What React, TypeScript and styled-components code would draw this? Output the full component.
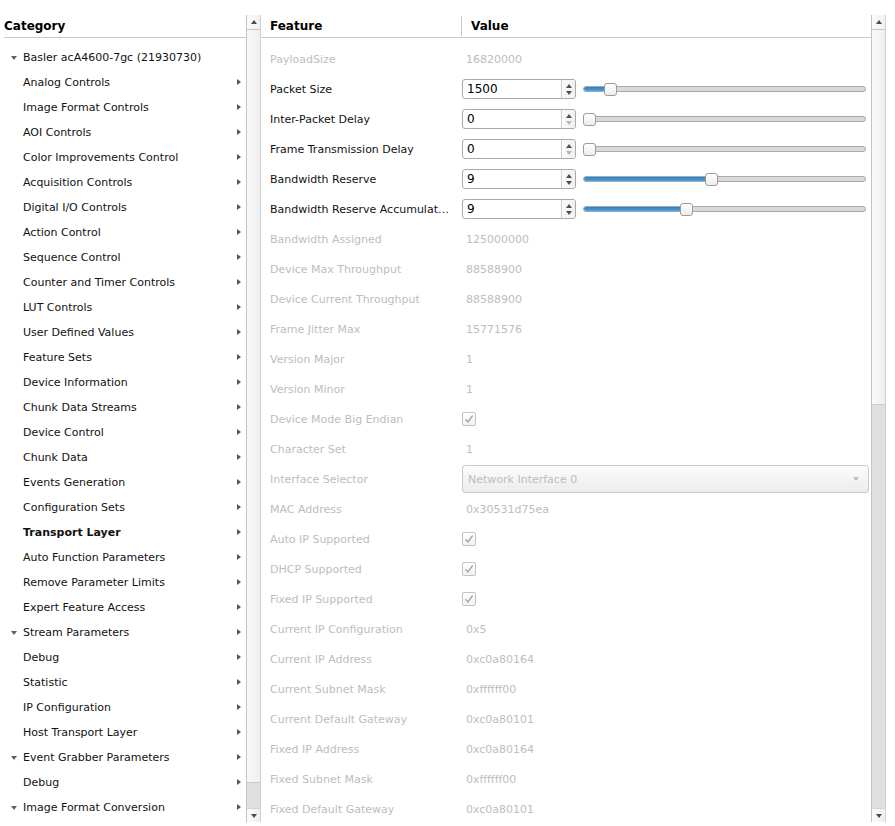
import React from 'react';
import styled, { createGlobalStyle } from 'styled-components';

const Global = createGlobalStyle`
  html, body { margin: 0; padding: 0; background: #ffffff; }
  body {
    font-family: "DejaVu Sans", Verdana, sans-serif;
    font-size: 11px;
    color: #111111;
  }
  * { box-sizing: border-box; }
`;

const Page = styled.div`
  display: flex;
  align-items: flex-start;
  padding: 15px 0 0 4px;
  width: 895px;
  height: 826px;
  overflow: hidden;
`;

const Pane = styled.div<{ $w: number }>`
  display: flex;
  width: ${(p) => p.$w}px;
  height: 807px;
  flex: none;
`;

const View = styled.div`
  flex: 1;
  display: flex;
  flex-direction: column;
  overflow: hidden;
  background: #ffffff;
`;

const Header = styled.div`
  display: flex;
  height: 23px;
  flex: none;
  border-bottom: 1px solid #c8c8c8;
`;

const HeaderCell = styled.div<{ $w?: number; $pad: number; $divider?: boolean }>`
  display: flex;
  align-items: center;
  font-weight: bold;
  font-size: 12px;
  color: #000;
  padding-left: ${(p) => p.$pad}px;
  ${(p) => (p.$w ? `width: ${p.$w}px; flex: none;` : 'flex: 1;')}
  ${(p) =>
    p.$divider
      ? `border-left: 1px solid #c8c8c8; margin: 1px 0 1px 0;`
      : ''}
`;

const Body = styled.div<{ $top: number }>`
  display: flex;
  flex-direction: column;
  padding-top: ${(p) => p.$top}px;
`;

/* ---------- tree ---------- */

const TreeRow = styled.div`
  display: flex;
  align-items: center;
  height: 25px;
  flex: none;
`;

const ExpandSlot = styled.div`
  width: 19px;
  flex: none;
  display: flex;
  justify-content: center;
  padding-left: 1px;
`;

const DownTri = styled.span`
  width: 0;
  height: 0;
  border-left: 3.5px solid transparent;
  border-right: 3.5px solid transparent;
  border-top: 4px solid #606060;
`;

const TreeText = styled.div<{ $bold?: boolean }>`
  flex: 1;
  white-space: nowrap;
  font-weight: ${(p) => (p.$bold ? 'bold' : 'normal')};
  color: #111;
`;

const SubArrow = styled.span`
  width: 0;
  height: 0;
  margin-right: 5px;
  margin-bottom: 1px;
  border-top: 3.5px solid transparent;
  border-bottom: 3.5px solid transparent;
  border-left: 4px solid #555555;
`;

/* ---------- scrollbar ---------- */

const ScrollBar = styled.div`
  width: 15px;
  flex: none;
  display: flex;
  flex-direction: column;
  border-left: 1px solid #c4c4c4;
  border-right: 1px solid #d0d0d0;
  background: linear-gradient(to right, #f9f9f9, #efefef);
`;

const ScrollBtn = styled.div<{ $bottom?: boolean; $h: number }>`
  height: ${(p) => p.$h}px;
  flex: none;
  display: flex;
  align-items: ${(p) => (p.$bottom ? 'flex-start' : 'center')};
  padding-top: ${(p) => (p.$bottom ? '5px' : '0')};
  justify-content: center;
  ${(p) => (p.$bottom ? 'border-top: 1px solid #d4d4d4;' : 'border-bottom: 1px solid #c8c8c8;')}
  background: linear-gradient(to right, #fbfbfb, #f0f0f0);
`;

const UpTri = styled.span`
  width: 0;
  height: 0;
  border-left: 3.5px solid transparent;
  border-right: 3.5px solid transparent;
  border-bottom: 4px solid #4a4a4a;
`;

const DownTriDark = styled.span`
  width: 0;
  height: 0;
  border-left: 3.5px solid transparent;
  border-right: 3.5px solid transparent;
  border-top: 4px solid #4a4a4a;
`;

const TrackSpace = styled.div`
  flex: 1;
`;

const Thumb = styled.div<{ $h: number }>`
  height: ${(p) => p.$h}px;
  flex: none;
  background: #e0e0e0;
  border-top: 1px solid #cbcbcb;
`;

/* ---------- property grid ---------- */

const PropRow = styled.div`
  display: flex;
  align-items: center;
  height: 30px;
  flex: none;
`;

const FeatureCell = styled.div<{ $disabled?: boolean }>`
  width: 201px;
  flex: none;
  padding: 0 10px 0 9px;
  white-space: nowrap;
  overflow: hidden;
  text-overflow: ellipsis;
  color: ${(p) => (p.$disabled ? '#bdbdbd' : '#111')};
`;

const ValueCell = styled.div`
  flex: 1;
  display: flex;
  align-items: center;
`;

const ValueText = styled.div`
  padding-left: 4px;
  color: #bdbdbd;
`;

const SpinBox = styled.div`
  width: 114px;
  height: 20px;
  flex: none;
  display: flex;
  border: 1px solid #a9a9a9;
  border-radius: 3px;
  background: #fff;
`;

const SpinText = styled.div`
  flex: 1;
  display: flex;
  align-items: center;
  padding-left: 4px;
  font-size: 12px;
  color: #000;
`;

const SpinButtons = styled.div`
  width: 14px;
  flex: none;
  display: flex;
  flex-direction: column;
  align-items: center;
  justify-content: center;
  gap: 3px;
  border-left: 1px solid #cfcfcf;
  background: linear-gradient(to right, #fbfbfb, #f0f0f0);
  border-radius: 0 3px 3px 0;
`;

const SpinUp = styled.span`
  width: 0;
  height: 0;
  border-left: 3.5px solid transparent;
  border-right: 3.5px solid transparent;
  border-bottom: 4px solid #505050;
`;

const SpinDown = styled.span<{ $off?: boolean }>`
  width: 0;
  height: 0;
  border-left: 3.5px solid transparent;
  border-right: 3.5px solid transparent;
  border-top: 4px solid ${(p) => (p.$off ? '#b8b8b8' : '#505050')};
`;

const Slider = styled.div`
  position: relative;
  width: 283px;
  height: 13px;
  margin-left: 7px;
  flex: none;
  display: flex;
  align-items: center;
`;

const Track = styled.div`
  width: 100%;
  height: 6px;
  border: 1px solid #a9a9a9;
  border-radius: 3px;
  background: #d9d9d9;
  overflow: hidden;
  display: flex;
`;

const Fill = styled.div`
  height: 100%;
  background: linear-gradient(to bottom, #2f7fc0, #4aa3e0);
`;

const Handle = styled.div`
  position: absolute;
  top: 0;
  width: 13px;
  height: 13px;
  border: 1px solid #9b9b9b;
  border-radius: 3px;
  background: linear-gradient(to bottom, #ffffff, #ededed);
`;

const Check = styled.div`
  width: 14px;
  height: 14px;
  flex: none;
  border: 1px solid #c3c3c3;
  border-radius: 2px;
  background: linear-gradient(to bottom, #ffffff, #f2f2f2);
  display: flex;
  align-items: center;
  justify-content: center;
`;

const Combo = styled.div`
  width: 407px;
  height: 28px;
  flex: none;
  display: flex;
  align-items: center;
  justify-content: space-between;
  padding: 0 9px 0 5px;
  border: 1px solid #cacaca;
  border-radius: 3px;
  background: linear-gradient(to bottom, #fcfcfc, #ececec);
  color: #bdbdbd;
`;

const ComboArrow = styled.span`
  width: 0;
  height: 0;
  border-left: 3.5px solid transparent;
  border-right: 3.5px solid transparent;
  border-top: 4px solid #bdbdbd;
`;

/* ---------- data ---------- */

type TreeItem = { label: string; expanded?: boolean; arrow?: boolean; bold?: boolean };

const treeItems: TreeItem[] = [
  { label: 'Basler acA4600-7gc (21930730)', expanded: true, arrow: false },
  { label: 'Analog Controls' },
  { label: 'Image Format Controls' },
  { label: 'AOI Controls' },
  { label: 'Color Improvements Control' },
  { label: 'Acquisition Controls' },
  { label: 'Digital I/O Controls' },
  { label: 'Action Control' },
  { label: 'Sequence Control' },
  { label: 'Counter and Timer Controls' },
  { label: 'LUT Controls' },
  { label: 'User Defined Values' },
  { label: 'Feature Sets' },
  { label: 'Device Information' },
  { label: 'Chunk Data Streams' },
  { label: 'Device Control' },
  { label: 'Chunk Data' },
  { label: 'Events Generation' },
  { label: 'Configuration Sets' },
  { label: 'Transport Layer', bold: true },
  { label: 'Auto Function Parameters' },
  { label: 'Remove Parameter Limits' },
  { label: 'Expert Feature Access' },
  { label: 'Stream Parameters', expanded: true },
  { label: 'Debug' },
  { label: 'Statistic' },
  { label: 'IP Configuration' },
  { label: 'Host Transport Layer' },
  { label: 'Event Grabber Parameters', expanded: true },
  { label: 'Debug' },
  { label: 'Image Format Conversion', expanded: true },
];

type Prop =
  | { kind: 'text'; label: string; value: string }
  | { kind: 'spin'; label: string; value: string; frac: number; atMin?: boolean }
  | { kind: 'check'; label: string }
  | { kind: 'combo'; label: string; value: string };

const props: Prop[] = [
  { kind: 'text', label: 'PayloadSize', value: '16820000' },
  { kind: 'spin', label: 'Packet Size', value: '1500', frac: 0.078 },
  { kind: 'spin', label: 'Inter-Packet Delay', value: '0', frac: 0, atMin: true },
  { kind: 'spin', label: 'Frame Transmission Delay', value: '0', frac: 0, atMin: true },
  { kind: 'spin', label: 'Bandwidth Reserve', value: '9', frac: 0.452 },
  { kind: 'spin', label: 'Bandwidth Reserve Accumulation', value: '9', frac: 0.361 },
  { kind: 'text', label: 'Bandwidth Assigned', value: '125000000' },
  { kind: 'text', label: 'Device Max Throughput', value: '88588900' },
  { kind: 'text', label: 'Device Current Throughput', value: '88588900' },
  { kind: 'text', label: 'Frame Jitter Max', value: '15771576' },
  { kind: 'text', label: 'Version Major', value: '1' },
  { kind: 'text', label: 'Version Minor', value: '1' },
  { kind: 'check', label: 'Device Mode Big Endian' },
  { kind: 'text', label: 'Character Set', value: '1' },
  { kind: 'combo', label: 'Interface Selector', value: 'Network Interface 0' },
  { kind: 'text', label: 'MAC Address', value: '0x30531d75ea' },
  { kind: 'check', label: 'Auto IP Supported' },
  { kind: 'check', label: 'DHCP Supported' },
  { kind: 'check', label: 'Fixed IP Supported' },
  { kind: 'text', label: 'Current IP Configuration', value: '0x5' },
  { kind: 'text', label: 'Current IP Address', value: '0xc0a80164' },
  { kind: 'text', label: 'Current Subnet Mask', value: '0xffffff00' },
  { kind: 'text', label: 'Current Default Gateway', value: '0xc0a80101' },
  { kind: 'text', label: 'Fixed IP Address', value: '0xc0a80164' },
  { kind: 'text', label: 'Fixed Subnet Mask', value: '0xffffff00' },
  { kind: 'text', label: 'Fixed Default Gateway', value: '0xc0a80101' },
];

const CheckMark = () => (
  <svg width="10" height="10" viewBox="0 0 10 10">
    <path d="M1.5 5.2 L4 8 L8.6 1.5" fill="none" stroke="#a2a2a2" strokeWidth="1.3" />
  </svg>
);

const ValueWidget: React.FC<{ p: Prop }> = ({ p }) => {
  if (p.kind === 'text') return <ValueText>{p.value}</ValueText>;
  if (p.kind === 'check')
    return (
      <Check>
        <CheckMark />
      </Check>
    );
  if (p.kind === 'combo')
    return (
      <Combo>
        <span>{p.value}</span>
        <ComboArrow />
      </Combo>
    );
  const left = Math.round(p.frac * (283 - 13));
  return (
    <>
      <SpinBox>
        <SpinText>{p.value}</SpinText>
        <SpinButtons>
          <SpinUp />
          <SpinDown $off={p.atMin} />
        </SpinButtons>
      </SpinBox>
      <Slider>
        <Track>{left > 0 && <Fill style={{ width: left + 6 }} />}</Track>
        <Handle style={{ left }} />
      </Slider>
    </>
  );
};

export default function App() {
  return (
    <>
      <Global />
      <Page>
        <Pane $w={257}>
          <View>
            <Header>
              <HeaderCell $pad={0}>Category</HeaderCell>
            </Header>
            <Body $top={7}>
              {treeItems.map((t, i) => (
                <TreeRow key={i}>
                  <ExpandSlot>{t.expanded && <DownTri />}</ExpandSlot>
                  <TreeText $bold={t.bold}>{t.label}</TreeText>
                  {t.arrow !== false && <SubArrow />}
                </TreeRow>
              ))}
            </Body>
          </View>
          <ScrollBar>
            <ScrollBtn $h={15}>
              <UpTri />
            </ScrollBtn>
            <TrackSpace />
            <Thumb $h={26} />
            <ScrollBtn $h={14} $bottom>
              <DownTriDark />
            </ScrollBtn>
          </ScrollBar>
        </Pane>
        <Pane $w={625}>
          <View>
            <Header>
              <HeaderCell $w={200} $pad={9}>
                Feature
              </HeaderCell>
              <HeaderCell $pad={9} $divider>
                Value
              </HeaderCell>
            </Header>
            <Body $top={6}>
              {props.map((p, i) => (
                <PropRow key={i}>
                  <FeatureCell $disabled={p.kind === 'text' || p.kind === 'check' || p.kind === 'combo'}>
                    {p.label}
                  </FeatureCell>
                  <ValueCell>
                    <ValueWidget p={p} />
                  </ValueCell>
                </PropRow>
              ))}
            </Body>
          </View>
          <ScrollBar>
            <ScrollBtn $h={15}>
              <UpTri />
            </ScrollBtn>
            <TrackSpace />
            <Thumb $h={404} />
            <ScrollBtn $h={14} $bottom>
              <DownTriDark />
            </ScrollBtn>
          </ScrollBar>
        </Pane>
      </Page>
    </>
  );
}
